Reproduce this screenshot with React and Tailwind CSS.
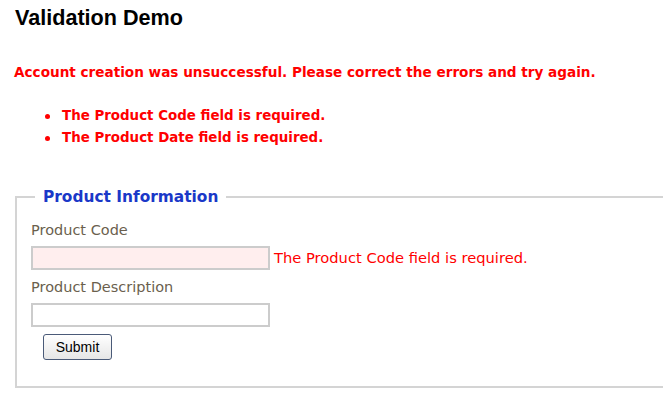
export default function App() {
  return (
    <div className="w-[663px] h-[410px] overflow-hidden bg-white relative" style={{ fontFamily: '"DejaVu Sans", Verdana, sans-serif' }}>
      <h1 className="absolute left-[15px] top-[6px] text-[21.6px] font-bold text-black leading-[24px]" style={{ fontFamily: '"Liberation Sans", Arial, sans-serif' }}>
        Validation Demo
      </h1>
      <div className="pt-[63px] pl-[14px]">
        <p className="text-[13.6px] font-bold text-[#ff0000] leading-[18px] whitespace-nowrap">
          Account creation was unsuccessful. Please correct the errors and try again.
        </p>
        <ul className="mt-[24px] pl-[31px] text-[13.4px] font-bold text-[#ff0000] leading-[22px]">
          <li className="flex items-center">
            <span className="w-[5px] h-[5px] rounded-full bg-[#ff0000] mr-[12px]" />
            The Product Code field is required.
          </li>
          <li className="flex items-center">
            <span className="w-[5px] h-[5px] rounded-full bg-[#ff0000] mr-[12px]" />
            The Product Date field is required.
          </li>
        </ul>
      </div>
      <fieldset className="absolute left-[15px] top-[187px] w-[700px] h-[201px] border-2 border-[#d4d4d4] pl-[14px] pr-0 pb-0 pt-0">
        <legend className="ml-[4px] px-[8px] text-[15.4px] font-bold text-[#1a38c8] leading-[20px]">
          Product Information
        </legend>
        <div className="text-[14.5px] text-[#6b5f4e] leading-[20px] mt-[13px]">Product Code</div>
        <div className="flex items-center mt-[6px]">
          <input className="w-[239px] h-[24px] border-2 border-[#cccccc] bg-[#ffeeee]" />
          <span className="ml-[4px] text-[14.7px] text-[#ff0000] leading-[20px] whitespace-nowrap">The Product Code field is required.</span>
        </div>
        <div className="text-[14.5px] text-[#6b5f4e] leading-[20px] mt-[7px]">Product Description</div>
        <div className="flex items-center mt-[6px]">
          <input className="w-[239px] h-[24px] border-2 border-[#cccccc] bg-white" />
        </div>
        <button className="ml-[12px] mt-[7px] w-[69px] h-[26px] border border-[#4a5a78] rounded-[3px] bg-gradient-to-b from-white to-[#e6e6e6] text-[14px] text-black" style={{ fontFamily: '"Liberation Sans", Arial, sans-serif' }}>
          Submit
        </button>
      </fieldset>
    </div>
  );
}
